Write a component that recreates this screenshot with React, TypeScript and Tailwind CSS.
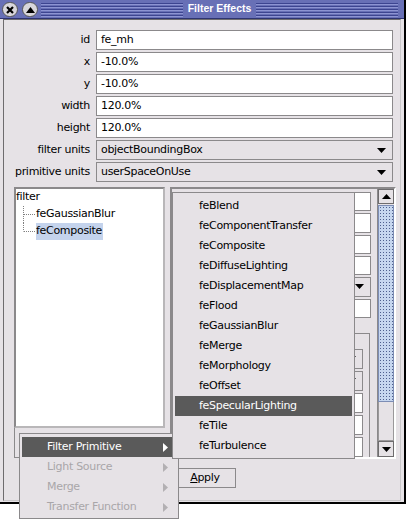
import React from 'react';

const BG = 'bg-[#e6e2e6]';

function DownArrow({ color = '#000' }: { color?: string }) {
  return (
    <svg width="9" height="5" viewBox="0 0 9 5">
      <path d="M0 0h9L4.5 5z" fill={color} />
    </svg>
  );
}

function UpArrow() {
  return (
    <svg width="9" height="5" viewBox="0 0 9 5">
      <path d="M0 5h9L4.5 0z" fill="#000" />
    </svg>
  );
}

function RightArrow({ color }: { color: string }) {
  return (
    <svg width="5" height="9" viewBox="0 0 5 9">
      <path d="M0 0v9l5-4.5z" fill={color} />
    </svg>
  );
}

function Field({ value = '' }: { value?: string }) {
  return (
    <div className="h-[20px] bg-white border border-[#8b898b] flex items-center px-[4px] whitespace-nowrap">
      {value}
    </div>
  );
}

function Combo({ value = '' }: { value?: string }) {
  return (
    <div className={`h-[20px] ${BG} border border-[#8b898b] flex items-center justify-between pl-[4px] pr-[6px] whitespace-nowrap`}>
      <span>{value}</span>
      <DownArrow />
    </div>
  );
}

function TitleBar() {
  const stripes = (
    <div className="flex-1 flex flex-col gap-[1px] pt-[3px]">
      {[0, 1, 2, 3, 4].map((i) => (
        <div key={i} className="h-[2px] border-t border-[#3d4590] border-b border-b-[#8d94d2]" />
      ))}
    </div>
  );
  return (
    <div className="h-[19px] bg-[#6870b6] border-b border-[#2e3470] flex items-start">
      <div className="flex gap-[4px] pl-[2px] pt-[2px]">
        <div className="w-[16px] h-[15px] rounded-full bg-[#d8d6dc] border border-[#555] flex items-center justify-center">
          <svg width="8" height="8" viewBox="0 0 8 8">
            <path d="M1 1l6 6M7 1l-6 6" stroke="#000" strokeWidth="2.2" />
          </svg>
        </div>
        <div className="w-[16px] h-[15px] rounded-full bg-[#d8d6dc] border border-[#555] flex items-center justify-center">
          <svg width="9" height="6" viewBox="0 0 9 6">
            <path d="M0 6h9L4.5 0z" fill="#000" />
          </svg>
        </div>
      </div>
      <div className="flex-1 flex items-start ml-[3px] mr-[6px] gap-[5px]">
        {stripes}
        <span className="font-['Liberation_Sans',sans-serif] font-bold text-[10.5px] text-white leading-[17px] tracking-normal">
          Filter Effects
        </span>
        {stripes}
      </div>
    </div>
  );
}

function TreeConnector({ last }: { last: boolean }) {
  return (
    <svg width="20" height="17" viewBox="0 0 20 17" className="shrink-0">
      <path d={last ? 'M7.5 0V8.5' : 'M7.5 0V17'} stroke="#808080" strokeDasharray="1 1" />
      <path d="M8 8.5H20" stroke="#808080" strokeDasharray="1 1" />
    </svg>
  );
}

const primitives = [
  'feBlend',
  'feComponentTransfer',
  'feComposite',
  'feDiffuseLighting',
  'feDisplacementMap',
  'feFlood',
  'feGaussianBlur',
  'feMerge',
  'feMorphology',
  'feOffset',
  'feSpecularLighting',
  'feTile',
  'feTurbulence',
];

const contextItems = [
  { label: 'Filter Primitive', active: true },
  { label: 'Light Source', active: false },
  { label: 'Merge', active: false },
  { label: 'Transfer Function', active: false },
];

export default function App() {
  return (
    <div className="relative w-[408px] h-[519px] bg-white overflow-hidden font-['DejaVu_Sans',sans-serif] text-[11px] tracking-[-0.3px] text-black">
      {/* Window */}
      <div className={`w-[406px] h-[504px] ${BG} border-r-2 border-b-2 border-black flex flex-col`}>
        <TitleBar />
        <div className="flex-1 mx-[3px] mb-[1px] border border-[#6e6c6e] border-r-[#c8c6c8] border-b-[#c8c6c8] flex flex-col">
          {/* Attribute form */}
          <div className="grid grid-cols-[86px_297px] gap-x-[6px] gap-y-[2px] pt-[10px] items-center">
            <span className="text-right">id</span>
            <Field value="fe_mh" />
            <span className="text-right">x</span>
            <Field value="-10.0%" />
            <span className="text-right">y</span>
            <Field value="-10.0%" />
            <span className="text-right">width</span>
            <Field value="120.0%" />
            <span className="text-right">height</span>
            <Field value="120.0%" />
            <span className="text-right">filter units</span>
            <Combo value="objectBoundingBox" />
            <span className="text-right whitespace-nowrap">primitive units</span>
            <Combo value="userSpaceOnUse" />
          </div>

          {/* Split area */}
          <div className="flex gap-[5px] ml-[10px] mt-[5px] h-[272px]">
            <div className="w-[151px] flex flex-col">
              <div className="h-[241px] bg-white border-2 border-[#8b898b] border-r-[#b9b7b9] border-b-[#b9b7b9]">
                <div className="h-[17px] flex items-center">filter</div>
                <div className="h-[17px] flex items-center">
                  <TreeConnector last={false} />
                  <span>feGaussianBlur</span>
                </div>
                <div className="h-[17px] flex items-center">
                  <TreeConnector last={true} />
                  <span className="bg-[#c4d3ec] pr-[1px]">feComposite</span>
                </div>
              </div>
              <div className="flex-1 border-l border-b border-[#8b898b] mb-[1px]" />
            </div>

            <div className="w-[226px] border-2 border-[#8b898b] border-r-white border-b-white flex">
              <div className="flex-1 overflow-hidden flex flex-col gap-[2px] pt-[3px] pr-[6px] pl-[90px]">
                <Field />
                <Field />
                <Field />
                <Field />
                <Combo />
                <Field />
                <div className="mt-[13px] ml-[4px] mr-[1px] border border-[#8b898b] border-b-0 pt-[15px] pl-[4px] pr-[6px] flex flex-col gap-[2px]">
                  <Combo />
                  <Combo />
                  <Field />
                  <Field />
                  <Field />
                </div>
              </div>
              {/* Scrollbar */}
              <div className="w-[17px] flex flex-col border-l border-[#8b898b]">
                <div className={`h-[15px] ${BG} border border-[#6e6c6e] flex items-center justify-center`}>
                  <UpArrow />
                </div>
                <div className="h-[197px] mt-[1px] bg-[#c6d6ef] bg-[radial-gradient(#4e5f8e_0.8px,transparent_1px)] bg-[length:3px_3px] border border-[#7d8db5]" />
                <div className="flex-1 border border-[#9a989a] border-t-0" />
                <div className={`h-[16px] ${BG} border border-[#6e6c6e] flex items-center justify-center`}>
                  <DownArrow />
                </div>
              </div>
            </div>
          </div>

          {/* Buttons */}
          <div className="flex ml-[170px] mt-[9px]">
            <div className={`h-[20px] w-[62px] ${BG} border border-[#8b898b] flex items-center justify-center`}>
              <span>
                <span className="underline">A</span>pply
              </span>
            </div>
          </div>
        </div>
      </div>

      {/* Context menu */}
      <div className={`absolute left-[19px] top-[433px] w-[160px] h-[86px] ${BG} border border-[#8b898b] px-[2px] py-[3px] flex flex-col`}>
        {contextItems.map((it) => (
          <div
            key={it.label}
            className={`h-[20px] shrink-0 flex items-center justify-between pl-[25px] pr-[8px] ${
              it.active ? 'bg-[#5a5a5a] text-white' : 'text-[#a9a6a9]'
            }`}
          >
            <span>{it.label}</span>
            <RightArrow color={it.active ? '#ffffff' : '#b3b0b3'} />
          </div>
        ))}
      </div>

      {/* Submenu */}
      <div className={`absolute left-[172px] top-[192px] w-[183px] h-[267px] ${BG} border border-[#8b898b] px-[2px] py-[3px] flex flex-col`}>
        {primitives.map((p) => (
          <div
            key={p}
            className={`h-[20px] shrink-0 flex items-center pl-[24px] ${
              p === 'feSpecularLighting' ? 'bg-[#5a5a5a] text-white' : ''
            }`}
          >
            {p}
          </div>
        ))}
      </div>
    </div>
  );
}
